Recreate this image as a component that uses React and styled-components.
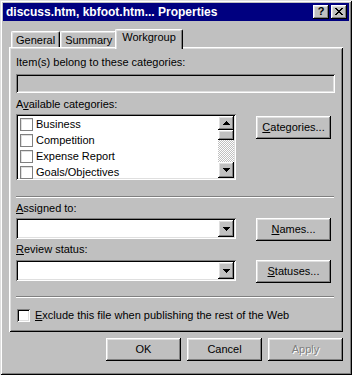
import React from 'react';
import styled, { createGlobalStyle, css } from 'styled-components';

const GlobalStyle = createGlobalStyle`
  html, body { margin: 0; padding: 0; background: #c0c0c0; }
  body {
    font-family: "Liberation Sans", Arial, sans-serif;
    font-size: 11px;
    color: #000;
  }
`;

const raised = css`
  box-shadow: inset -1px -1px #000, inset 1px 1px #fff,
    inset -2px -2px #808080, inset 2px 2px #dfdfdf;
`;

const sunken = css`
  box-shadow: inset 1px 1px #808080, inset -1px -1px #fff,
    inset 2px 2px #000, inset -2px -2px #dfdfdf;
`;

const Window = styled.div`
  width: 352px;
  height: 375px;
  box-sizing: border-box;
  padding: 3px;
  background: #c0c0c0;
  box-shadow: inset 1px 1px #dfdfdf, inset -1px -1px #000,
    inset 2px 2px #fff, inset -2px -2px #808080;
  display: flex;
  flex-direction: column;
`;

const TitleBar = styled.div`
  height: 18px;
  background: #000080;
  color: #fff;
  display: flex;
  align-items: center;
  padding: 0 2px 0 3px;
`;

const Title = styled.span`
  flex: 1;
  font-weight: bold;
  font-size: 12px;
  white-space: nowrap;
`;

const CaptionButton = styled.div`
  width: 16px;
  height: 14px;
  box-sizing: border-box;
  background: #c0c0c0;
  ${raised}
  margin-left: ${(p) => (p.$gap ? '2px' : '0')};
  display: flex;
  align-items: center;
  justify-content: center;
  color: #000;
  font-weight: bold;
  font-size: 11px;
  line-height: 1;
  padding-bottom: 1px;
`;

const Body = styled.div`
  padding: 8px 6px 0 6px;
  display: flex;
  flex-direction: column;
`;

const TabRow = styled.div`
  height: 18px;
  display: flex;
  align-items: flex-end;
  padding-left: 2px;
`;

const Tab = styled.div`
  height: ${(p) => (p.$active ? '20px' : '16px')};
  margin: ${(p) => (p.$active ? '0 -2px -2px -2px' : '0')};
  padding: ${(p) => (p.$active ? '1px 6px 0 6px' : '2px 4px 0 4px')};
  box-sizing: border-box;
  background: #c0c0c0;
  border-top: 1px solid #fff;
  border-left: 1px solid #fff;
  border-right: 1px solid #000;
  border-radius: 2px 2px 0 0;
  box-shadow: inset -1px 0 #808080, inset 1px 1px #dfdfdf;
  position: relative;
  z-index: ${(p) => (p.$active ? 2 : 1)};
  white-space: nowrap;
  line-height: 13px;
`;

const Panel = styled.div`
  background: #c0c0c0;
  padding: 9px 8px 10px 7px;
  box-shadow: inset 1px 1px #fff, inset -1px -1px #000,
    inset 2px 2px #dfdfdf, inset -2px -2px #808080;
  display: flex;
  flex-direction: column;
`;

const Label = styled.div`
  line-height: 13px;
  height: 13px;
  white-space: nowrap;
  margin-bottom: ${(p) => p.$mb || 3}px;
`;

const Field = styled.div`
  height: 19px;
  background: ${(p) => (p.$disabled ? '#c0c0c0' : '#fff')};
  ${sunken}
`;

const Grid = styled.div`
  display: grid;
  grid-template-columns: 220px 75px;
  column-gap: 20px;
  align-items: start;
  margin-top: ${(p) => p.$mt || 0}px;
`;

const ListBox = styled.div`
  height: 66px;
  box-sizing: border-box;
  background: #fff;
  ${sunken}
  padding: 2px;
  display: flex;
`;

const ListItems = styled.div`
  flex: 1;
  padding-left: 2px;
`;

const ListRow = styled.div`
  height: 16px;
  display: flex;
  align-items: center;
  gap: 3px;
  line-height: 13px;
`;

const Check = styled.div`
  width: 13px;
  height: 13px;
  box-sizing: border-box;
  background: #fff;
  flex: none;
  ${(p) =>
    p.$flat
      ? css`
          border: 1px solid #808080;
          box-shadow: inset 1px 1px #dfdfdf;
        `
      : sunken}
`;

const ScrollBar = styled.div`
  width: 16px;
  display: flex;
  flex-direction: column;
`;

const ScrollButton = styled.div`
  height: ${(p) => p.$h}px;
  box-sizing: border-box;
  background: #c0c0c0;
  ${raised}
  display: flex;
  align-items: center;
  justify-content: center;
  flex: none;
`;

const Track = styled.div`
  flex: 1;
  background: repeating-conic-gradient(#c0c0c0 0% 25%, #fff 0% 50%) 0 0 / 2px 2px;
`;

const PushButton = styled.div`
  width: 75px;
  height: 23px;
  box-sizing: border-box;
  background: #c0c0c0;
  ${raised}
  display: flex;
  align-items: center;
  justify-content: center;
  line-height: 13px;
  margin-top: ${(p) => p.$mt || 0}px;
  color: ${(p) => (p.$disabled ? '#808080' : '#000')};
  text-shadow: ${(p) => (p.$disabled ? '1px 1px 0 #fff' : 'none')};
`;

const Separator = styled.div`
  height: 2px;
  margin-right: 1px;
  border-top: 1px solid #808080;
  border-bottom: 1px solid #fff;
  box-sizing: border-box;
  margin-top: ${(p) => p.$mt}px;
`;

const Combo = styled.div`
  height: 21px;
  box-sizing: border-box;
  background: #fff;
  ${sunken}
  padding: 2px;
  display: flex;
  justify-content: flex-end;
`;

const ComboButton = styled(ScrollButton)`
  width: 16px;
  height: 17px;
`;

const CheckRow = styled.div`
  display: flex;
  align-items: center;
  gap: 5px;
  padding-left: 1px;
  margin-top: 11px;
  line-height: 13px;
  white-space: nowrap;
`;

const Footer = styled.div`
  display: flex;
  justify-content: flex-end;
  gap: 6px;
  margin-top: 6px;
`;

const Arrow = ({ up }) => (
  <svg width="7" height="4" viewBox="0 0 7 4" shapeRendering="crispEdges">
    <polygon points={up ? '3.5,0 7,4 0,4' : '0,0 7,0 3.5,4'} fill="#000" />
  </svg>
);

const CloseGlyph = () => (
  <svg width="8" height="7" viewBox="0 0 8 7" shapeRendering="crispEdges">
    <path
      d="M0 0h2v1h1v1h2V1h1V0h2v1H7v1H6v1H5v1h1v1h1v1h1v1H6V6H5V5H3v1H2v1H0V6h1V5h1V4h1V3H2V2H1V1H0z"
      fill="#000"
    />
  </svg>
);

const categories = ['Business', 'Competition', 'Expense Report', 'Goals/Objectives'];

export default function App() {
  return (
    <>
      <GlobalStyle />
      <Window>
        <TitleBar>
          <Title>discuss.htm, kbfoot.htm... Properties</Title>
          <CaptionButton>?</CaptionButton>
          <CaptionButton $gap>
            <CloseGlyph />
          </CaptionButton>
        </TitleBar>
        <Body>
          <TabRow>
            <Tab>General</Tab>
            <Tab>Summary</Tab>
            <Tab $active>Workgroup</Tab>
          </TabRow>
          <Panel>
            <Label $mb={5}>Item(s) belong to these categories:</Label>
            <Field $disabled />

            <Grid $mt={5}>
              <div>
                <Label>
                  A<u>v</u>ailable categories:
                </Label>
                <ListBox>
                  <ListItems>
                    {categories.map((c) => (
                      <ListRow key={c}>
                        <Check $flat />
                        {c}
                      </ListRow>
                    ))}
                  </ListItems>
                  <ScrollBar>
                    <ScrollButton $h={14}>
                      <Arrow up />
                    </ScrollButton>
                    <ScrollButton $h={10} />
                    <Track />
                    <ScrollButton $h={16}>
                      <Arrow />
                    </ScrollButton>
                  </ScrollBar>
                </ListBox>
              </div>
              <PushButton $mt={18}>
                <span>
                  <u>C</u>ategories...
                </span>
              </PushButton>
            </Grid>

            <Separator $mt={16} />

            <Grid $mt={4}>
              <div>
                <Label>
                  <u>A</u>ssigned to:
                </Label>
                <Combo>
                  <ComboButton>
                    <Arrow />
                  </ComboButton>
                </Combo>
              </div>
              <PushButton $mt={16}>
                <span>
                  <u>N</u>ames...
                </span>
              </PushButton>
            </Grid>

            <Grid $mt={2}>
              <div>
                <Label $mb={4}>
                  <u>R</u>eview status:
                </Label>
                <Combo>
                  <ComboButton>
                    <Arrow />
                  </ComboButton>
                </Combo>
              </div>
              <PushButton $mt={17}>
                <span>
                  <u>S</u>tatuses...
                </span>
              </PushButton>
            </Grid>

            <Separator $mt={13} />

            <CheckRow>
              <Check />
              <span>
                <u>E</u>xclude this file when publishing the rest of the Web
              </span>
            </CheckRow>
          </Panel>
          <Footer>
            <PushButton>OK</PushButton>
            <PushButton>Cancel</PushButton>
            <PushButton $disabled>Apply</PushButton>
          </Footer>
        </Body>
      </Window>
    </>
  );
}
